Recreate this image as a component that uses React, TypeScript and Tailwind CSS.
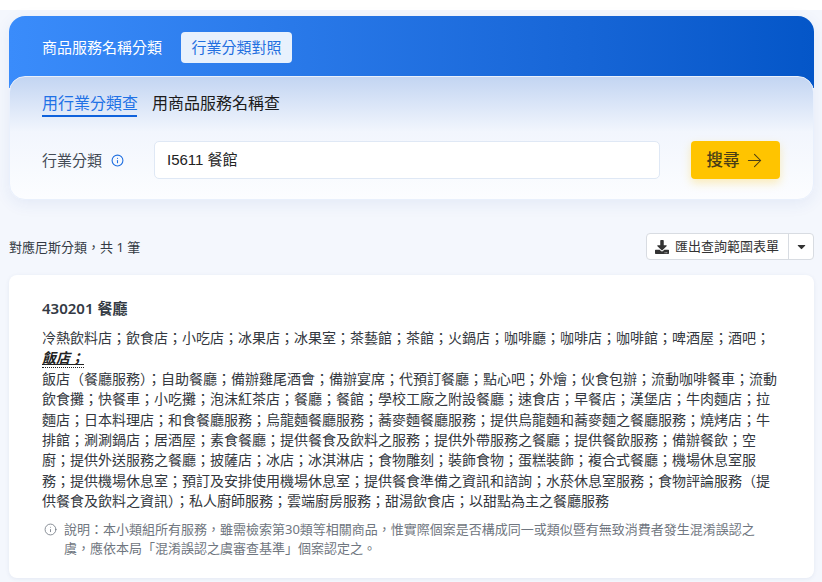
import { ArrowRight, Info } from 'lucide-react';
import { FaCaretDown, FaDownload } from 'react-icons/fa';

const font = "font-['Noto_Sans','Noto_Sans_CJK_TC',sans-serif]";

export default function App() {
  return (
    <div lang="zh-Hant" className={`${font} h-[582px] overflow-hidden bg-white pt-[10px]`}>
      <div className="h-full bg-[#f4f7fd] pl-[9px] pr-[8px] pt-[6px]">
        <div className="rounded-[16px] shadow-[0_4px_16px_rgba(40,80,160,0.08)]">
          <div className="flex h-[72px] items-start gap-[9px] rounded-t-[16px] bg-gradient-to-r from-[#3a8cfb] to-[#0456c8] pl-[23px] pt-[16px]">
            <div className="flex h-[31px] items-center px-[10px] text-[15px] text-white">商品服務名稱分類</div>
            <div className="flex h-[31px] w-[111px] items-center justify-center rounded-[4px] bg-[#e8f1fd] text-[15px] text-[#1f6fe0]">行業分類對照</div>
          </div>
          <div className="-mt-[12px] h-[124px] rounded-[16px] border border-[#e9f0fc] bg-gradient-to-b from-[#c3d5f2] via-[#f2f6fd] via-45% to-[#fcfdff] px-[32px] pt-[6px]">
            <div className="flex gap-[15px] text-[16px]">
              <div className="h-[34px] w-[95px] whitespace-nowrap border-b-2 border-[#0f62dc] pt-[5px] leading-[30px] text-[#1f72e6]">用行業分類查</div>
              <div className="pt-[5px] leading-[30px] text-[#1b1b1b]">用商品服務名稱查</div>
            </div>
            <div className="mt-[23px] flex items-center">
              <span className="whitespace-nowrap text-[15px] text-[#444b55]">行業分類</span>
              <Info size={13} strokeWidth={2} className="ml-[9px] shrink-0 text-[#1f6fe0]" />
              <div className="ml-[30px] flex h-[38px] w-[506px] shrink-0 items-center rounded-[5px] border border-[#dfe8f5] bg-white pl-[12px] text-[15px] text-[#222]">
                <span className="font-['Liberation_Sans','Noto_Sans_CJK_TC',sans-serif]">I5611 餐館</span>
              </div>
              <button className="ml-[31px] flex h-[38px] w-[89px] shrink-0 items-center justify-center gap-[4px] rounded-[4px] bg-[#ffc400] text-[16.5px] font-medium text-[#4a3f16] shadow-[0_4px_10px_rgba(255,196,0,0.28)]">
                搜尋
                <ArrowRight size={21} strokeWidth={1.2} />
              </button>
            </div>
          </div>
        </div>

        <div className="mt-[33px] flex h-[27px] items-center justify-between">
          <span className="pt-[2px] text-[13px] text-[#333a44]">對應尼斯分類，共 1 筆</span>
          <div className="flex h-[27px] w-[168px] rounded-[4px] border border-[#d8dce2] bg-white text-[#333]">
            <div className="flex flex-1 items-center gap-[6px] pl-[8px] text-[13px]">
              <FaDownload size={14} />
              <span>匯出查詢範圍表單</span>
            </div>
            <div className="flex w-[25px] items-center justify-center border-l border-[#d8dce2]">
              <FaCaretDown size={13} />
            </div>
          </div>
        </div>

        <div className="mt-[15px] h-[303px] rounded-[8px] bg-white px-[33px] pt-[21px] shadow-[0_1px_4px_rgba(40,60,110,0.08)]">
          <h3 className="text-[15px] font-semibold leading-[24px] text-[#333a44]">430201 餐廳</h3>
          <div className="mt-[8px] w-[738px] text-[14px] leading-[20.4px] text-[#333840]">
            <div>冷熱飲料店；飲食店；小吃店；冰果店；冰果室；茶藝館；茶館；火鍋店；咖啡廳；咖啡店；咖啡館；啤酒屋；酒吧；</div>
            <div>
              <span className="inline-block border-b border-dotted border-[#222] font-bold italic leading-[18px] text-[#222] underline">飯店；</span>
            </div>
            <div>飯店（餐廳服務）；自助餐廳；備辦雞尾酒會；備辦宴席；代預訂餐廳；點心吧；外燴；伙食包辦；流動咖啡餐車；流動飲食攤；快餐車；小吃攤；泡沫紅茶店；餐廳；餐館；學校工廠之附設餐廳；速食店；早餐店；漢堡店；牛肉麵店；拉麵店；日本料理店；和食餐廳服務；烏龍麵餐廳服務；蕎麥麵餐廳服務；提供烏龍麵和蕎麥麵之餐廳服務；燒烤店；牛排館；涮涮鍋店；居酒屋；素食餐廳；提供餐食及飲料之服務；提供外帶服務之餐廳；提供餐飲服務；備辦餐飲；空廚；提供外送服務之餐廳；披薩店；冰店；冰淇淋店；食物雕刻；裝飾食物；蛋糕裝飾；複合式餐廳；機場休息室服務；提供機場休息室；預訂及安排使用機場休息室；提供餐食準備之資訊和諮詢；水菸休息室服務；食物評論服務（提供餐食及飲料之資訊）；私人廚師服務；雲端廚房服務；甜湯飲食店；以甜點為主之餐廳服務</div>
          </div>
          <div className="mt-[8px] flex w-[725px] gap-[7px] text-[13px] leading-[19px] text-[#6f7680]">
            <Info size={13} strokeWidth={1.5} className="mt-[3px] ml-[2px] shrink-0" />
            <p>說明：本小類組所有服務，雖需檢索第30類等相關商品，惟實際個案是否構成同一或類似暨有無致消費者發生混淆誤認之虞，應依本局「混淆誤認之虞審查基準」個案認定之。</p>
          </div>
        </div>
      </div>
    </div>
  );
}
